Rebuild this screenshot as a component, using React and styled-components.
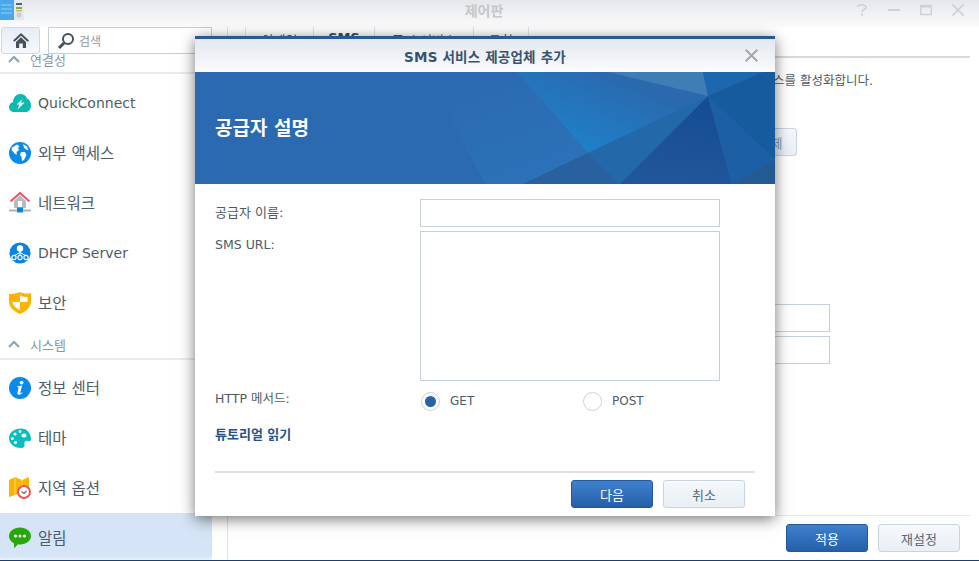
import React from "react";
import styled, { createGlobalStyle } from "styled-components";

const Global = createGlobalStyle`
  html, body { margin: 0; padding: 0; background: #fff; overflow: hidden; }
  * { box-sizing: border-box; }
  body { font-family: "DejaVu Sans", "Noto Sans CJK KR", sans-serif; font-size: 13px; color: #4c5a68; }
`;

const Page = styled.div`
  position: relative;
  width: 979px;
  height: 561px;
  display: flex;
  flex-direction: column;
  overflow: hidden;
  border-bottom: 1px solid #1d3f6e;
`;

const TitleBar = styled.div`
  height: 27px;
  flex: none;
  display: flex;
  align-items: center;
  background: linear-gradient(#e4e7eb, #fbfbfc);
  position: relative;
`;
const TitleText = styled.div`
  flex: 1;
  text-align: center;
  font-size: 14px;
  font-weight: 700;
  color: #c4c7ca;
  margin-top: -8px;
  padding-left: 88px;
`;
const WinButtons = styled.div`
  display: flex;
  gap: 20px;
  padding-right: 15px;
  margin-top: -7px;
`;
const AppLogo = styled.svg`
  width: 24px;
  height: 21px;
  align-self: flex-start;
  flex: none;
`;

const Body = styled.div`
  flex: 1;
  display: flex;
  min-height: 0;
`;
const Side = styled.div`
  width: 228px;
  flex: none;
  border-right: 1px solid #dfe2e6;
  padding-right: 15px;
  display: flex;
  flex-direction: column;
`;
const Toolbar = styled.div`
  height: 27px;
  flex: none;
  display: flex;
  gap: 8px;
  padding-left: 1px;
  background: #fff;
  position: relative;
  z-index: 1;
`;
const HomeButton = styled.div`
  width: 39px;
  display: flex;
  align-items: center;
  justify-content: center;
  border: 1px solid #cfd9e4;
  border-radius: 3px;
  background: linear-gradient(#e7eef7, #f5f8fc);
`;
const SearchBox = styled.div`
  flex: 1;
  display: flex;
  align-items: center;
  gap: 4px;
  padding-left: 8px;
  border: 1px solid #c6cfd9;
  font-size: 12px;
  color: #8f99a4;
`;
const NavList = styled.div`
  flex: 1;
  overflow: hidden;
  min-height: 0;
`;
const NavInner = styled.div`
  margin-top: -10px;
`;
const SectionHead = styled.div`
  height: ${(p) => p.$h}px;
  margin-bottom: ${(p) => p.$mb}px;
  display: flex;
  align-items: center;
  gap: 10px;
  padding: 2px 0 0 8px;
  border-bottom: 2px solid #e9ebee;
  color: #7f98af;
  font-size: 13px;
`;
const NavRow = styled.div`
  height: 50px;
  display: flex;
  align-items: center;
  gap: 7px;
  padding-left: 9px;
  color: #4d5c6c;
  background: ${(p) => (p.$active ? "linear-gradient(#d5e4f6 0, #d5e4f6 86%, #fdfeff 100%)" : "transparent")};
`;
const NavLabel = styled.span`
  font-size: ${(p) => (p.$ko ? 15.5 : 14)}px;
  margin-top: ${(p) => (p.$ko ? -2 : 0)}px;
`;

const Main = styled.div`
  flex: 1;
  display: flex;
  flex-direction: column;
  padding-left: 17px;
  padding-right: 9px;
  min-width: 0;
`;
const Tabs = styled.div`
  height: 31px;
  flex: none;
  display: flex;
  border-bottom: 2px solid #d6d9dd;
`;
const Tab = styled.div`
  width: ${(p) => p.$w}px;
  border-left: 1px solid #e0e3e7;
  border-right: ${(p) => (p.$last ? "1px solid #e0e3e7" : "none")};
  text-align: center;
  font-size: 13px;
  font-weight: ${(p) => (p.$active ? 700 : 400)};
  color: ${(p) => (p.$active ? "#2f4d70" : "#4c5a68")};
  padding-top: 3px;
`;
const MainContent = styled.div`
  flex: 1;
  display: flex;
  flex-direction: column;
  padding-top: 14px;
`;
const Desc = styled.div`
  text-align: right;
  padding-right: 97px;
  font-size: 12.5px;
  line-height: 18px;
  white-space: nowrap;
`;
const DeleteWrap = styled.div`
  display: flex;
  justify-content: flex-end;
  padding-right: 173px;
  margin-top: 38px;
`;
const FieldStack = styled.div`
  display: flex;
  flex-direction: column;
  gap: 4px;
  align-items: flex-end;
  padding-right: 140px;
  margin-top: 148px;
`;
const SmallField = styled.div`
  width: 300px;
  height: 28px;
  border: 1px solid #c6d0db;
`;
const Footer = styled.div`
  margin-top: auto;
  height: 45px;
  flex: none;
  border-top: 1px solid #e4e6e8;
  display: flex;
  justify-content: flex-end;
  gap: 10px;
  padding: 8px 10px 0 0;
`;
const Btn = styled.button`
  width: ${(p) => p.$w || 82}px;
  height: 28px;
  border-radius: 3px;
  font: inherit;
  font-size: 13px;
  padding: 0;
  border: 1px solid ${(p) => (p.$primary ? "#21589e" : "#c9d4e0")};
  color: ${(p) => (p.$primary ? "#fff" : p.$muted ? "#7d9cc0" : "#5a6672")};
  background: ${(p) => (p.$primary ? "linear-gradient(#3f80cd, #2460a9)" : "linear-gradient(#f5f8fc, #e9eff5)")};
`;

const Dialog = styled.div`
  position: absolute;
  left: 195px;
  top: 36px;
  width: 580px;
  height: 480px;
  background: #fff;
  border-top: 3px solid #2a5a94;
  box-shadow: 0 3px 14px rgba(0, 0, 0, 0.55);
  display: flex;
  flex-direction: column;
  z-index: 5;
`;
const DialogHead = styled.div`
  height: 33px;
  flex: none;
  display: flex;
  align-items: center;
  background: linear-gradient(#e3e8ef, #fafbfc);
  font-size: 13.5px;
  letter-spacing: 0.2px;
  font-weight: 700;
  color: #3a5272;
  position: relative;
`;
const DialogTitle = styled.div`
  flex: 1;
  text-align: center;
  padding-top: 1px;
`;
const DialogClose = styled.svg`
  position: absolute;
  right: 17px;
  top: 10px;
`;
const Banner = styled.div`
  height: 112px;
  flex: none;
  position: relative;
  background: #2b69b0;
  display: flex;
  align-items: center;
  padding-left: 20px;
  font-size: 19px;
  font-weight: 700;
  color: #fff;
`;
const BannerArt = styled.svg`
  position: absolute;
  inset: 0;
`;
const BannerText = styled.div`
  position: relative;
  padding-bottom: 3px;
`;
const Form = styled.div`
  flex: 1;
  display: grid;
  grid-template-columns: 205px 300px;
  grid-auto-rows: min-content;
  row-gap: 4px;
  padding: 15px 0 0 20px;
`;
const Label = styled.div`
  font-size: ${(p) => p.$size}px;
  line-height: 18px;
  padding-top: ${(p) => p.$top}px;
`;
const Field = styled.div`
  height: ${(p) => p.$h}px;
  border: 1px solid #c6d0db;
  background: #fff;
`;
const RadioRow = styled.div`
  display: flex;
  align-items: center;
  height: 32px;
  margin-left: 1px;
`;
const RadioItem = styled.div`
  width: 162px;
  flex: none;
  display: flex;
  align-items: center;
  gap: 10px;
  font-size: 12px;
`;
const RadioDot = styled.div`
  width: 19px;
  height: 19px;
  border-radius: 50%;
  border: 1px solid #c9d3de;
  display: flex;
  align-items: center;
  justify-content: center;
  &::after {
    content: "";
    display: ${(p) => (p.$on ? "block" : "none")};
    width: 11px;
    height: 11px;
    border-radius: 50%;
    background: #2a62a8;
  }
`;
const HttpLabel = styled(Label)`
  align-self: center;
  padding-bottom: 4px;
`;
const LinkText = styled.div`
  grid-column: 1 / 3;
  font-size: 13px;
  line-height: 18px;
  font-weight: 700;
  color: #24528c;
  margin-top: 5px;
`;
const DialogFoot = styled.div`
  margin: 0 20px;
  height: 45px;
  flex: none;
  border-top: 2px solid #e2e3e5;
  display: flex;
  justify-content: flex-end;
  gap: 10px;
  padding: 7px 10px 0 0;
`;

const Chevron = () => (
  <svg width="12" height="8" viewBox="0 0 12 8">
    <path d="M1 7 L6 2 L11 7" fill="none" stroke="#8aa1b6" strokeWidth="2" />
  </svg>
);

const IconCloud = () => (
  <svg width="22" height="22" viewBox="0 0 22 22">
    <path d="M5 20 C2 20 0 17.5 0 15 C0 12.5 1.8 10.5 4 10.2 C4 5.5 7.5 2 11.5 2 C14.5 2 17 3.5 18 6.5 C20.5 7.5 22 10.5 22 13.5 C22 17.5 19.5 20 17 20 Z" fill="#0cb9b0" />
    <path d="M14 6.5 L7.5 12.5 L10.5 12.5 L8.5 17.5 L15.5 10.5 L11.5 10.5 Z" fill="#fff" />
  </svg>
);
const IconGlobe = () => (
  <svg width="22" height="22" viewBox="0 0 22 22">
    <circle cx="11" cy="11" r="11" fill="#0a8ae8" />
    <path d="M3 5.5 L8 2.5 L10.5 4 L9 6 L10 8 L7.5 10 L8 12.5 L6 12 L3.5 9 L2.5 8 Z" fill="#fff" />
    <path d="M12 10 L16 10 L17.5 13 L15 18 L13 19 L12.5 15 L11 13 Z" fill="#fff" />
    <path d="M14 2 L18 4.5 L19.5 8 L17 7.5 L15 5.5 Z" fill="#fff" />
  </svg>
);
const IconNetwork = () => (
  <svg width="22" height="22" viewBox="0 0 22 22">
    <path d="M5 9 L11 3.5 L17 9 L17 16 L5 16 Z" fill="#b5bcc6" />
    <path d="M1.5 9.5 L11 1 L20.5 9.5" fill="none" stroke="#f4525a" strokeWidth="2" />
    <rect x="9" y="9" width="4" height="6" fill="#fff" />
    <rect x="0" y="17.5" width="22" height="2" fill="#a9b5c2" />
    <rect x="8" y="15.5" width="6" height="5" fill="#0a84de" />
  </svg>
);
const IconDhcp = () => (
  <svg width="22" height="22" viewBox="0 0 22 22">
    <circle cx="11" cy="11" r="10.5" fill="#0a84de" />
    <circle cx="11" cy="6.5" r="3.2" fill="#fff" />
    <path d="M11 9 V13 M11 10.5 L5.5 13.5 M11 10.5 L16.5 13.5" stroke="#fff" strokeWidth="1" fill="none" />
    <circle cx="5" cy="15.5" r="2.1" fill="none" stroke="#fff" strokeWidth="1.1" />
    <circle cx="11" cy="15.5" r="2.1" fill="none" stroke="#fff" strokeWidth="1.1" />
    <circle cx="17" cy="15.5" r="2.1" fill="none" stroke="#fff" strokeWidth="1.1" />
  </svg>
);
const IconShield = () => (
  <svg width="22" height="22" viewBox="0 0 22 22">
    <path d="M0 2 C4 2 8 1.5 11 0 C14 1.5 18 2 22 1 L22 10 C22 15 17 19.5 11 22 C5 19.5 0 15 0 10 Z" fill="#fdb400" />
    <path d="M11 3.5 C13.5 4.5 16 5 18.5 5 L18.5 10 L11 10 Z" fill="#fff" />
    <path d="M3.5 10 L11 10 L11 18 C7.5 16.5 4 14 3.5 10 Z" fill="#fff" />
  </svg>
);
const IconInfo = () => (
  <svg width="22" height="22" viewBox="0 0 22 22">
    <circle cx="11" cy="11" r="11" fill="#0a8ae8" />
    <circle cx="12.6" cy="5.6" r="1.9" fill="#fff" />
    <path d="M8.2 9.2 L13.2 8.6 L11.2 15.6 C11 16.4 11.8 16.4 13.2 15.2 L13.6 15.8 C11.8 18 8 18.6 8.4 15.8 L9.6 11 C9.8 10.2 9 10 8.2 10 Z" fill="#fff" />
  </svg>
);
const IconPalette = () => (
  <svg width="22" height="22" viewBox="0 0 22 22">
    <path d="M12 1.5 C18 1.5 22 6.5 22 12 C22 14 21 14.5 19 14 C16 13.3 15 15 15.5 17 C16 19.5 15 21 12 21 C5 21 0 16.5 0 11 C0 5.5 5.5 1.5 12 1.5 Z" fill="#07bec0" />
    <circle cx="6" cy="7" r="1.6" fill="#fff" />
    <circle cx="11" cy="4.6" r="1.4" fill="#fff" />
    <circle cx="3.4" cy="11.5" r="1.5" fill="#fff" />
    <circle cx="6.5" cy="15.5" r="1.6" fill="#fff" />
    <ellipse cx="15" cy="8.5" rx="2.6" ry="2" fill="#fff" />
  </svg>
);
const IconMap = () => (
  <svg width="22" height="22" viewBox="0 0 22 22">
    <path d="M0 3 L6 0 L13 3 L20 0 L20 12 L13 15 L6 18 L0 20 Z" fill="#fdb400" />
    <path d="M6 0 L6 18 M13 3 L13 15" stroke="#ffd873" strokeWidth="1" />
    <circle cx="15" cy="15" r="6" fill="#fff" stroke="#f4525a" strokeWidth="2" />
    <path d="M12.5 14.5 L15 16.5 L17.5 14" fill="none" stroke="#666" strokeWidth="1.2" />
  </svg>
);
const IconChat = () => (
  <svg width="22" height="22" viewBox="0 0 22 22">
    <path d="M11 0.5 C17.2 0.5 22 4.2 22 9 C22 13.8 17.2 17.5 11 17.5 C10.2 17.5 9.5 17.4 8.8 17.3 C7.6 19 5.5 21 5 21.5 C5.2 19.5 5.2 17.8 4.6 16 C1.8 14.5 0 12 0 9 C0 4.2 4.8 0.5 11 0.5 Z" fill="#27a70a" />
    <circle cx="6.5" cy="9" r="1.5" fill="#fff" />
    <circle cx="11" cy="9" r="1.5" fill="#fff" />
    <circle cx="15.5" cy="9" r="1.5" fill="#fff" />
  </svg>
);

const topItems = [
  { icon: <IconCloud />, label: "QuickConnect" },
  { icon: <IconGlobe />, label: "외부 액세스", ko: true },
  { icon: <IconNetwork />, label: "네트워크", ko: true },
  { icon: <IconDhcp />, label: "DHCP Server" },
  { icon: <IconShield />, label: "보안", ko: true },
];
const systemItems = [
  { icon: <IconInfo />, label: "정보 센터", ko: true },
  { icon: <IconPalette />, label: "테마", ko: true },
  { icon: <IconMap />, label: "지역 옵션", ko: true },
  { icon: <IconChat />, label: "알림", ko: true, active: true },
];

export default function App() {
  return (
    <Page>
      <Global />
      <TitleBar>
        <AppLogo viewBox="0 0 24 21">
          <rect x="0" y="0" width="14" height="20" fill="#4aa7ea" />
          <path d="M1 5 H12 M1 9 H12 M1 13 H12" stroke="#8fd0f7" strokeWidth="1" />
          <rect x="14" y="0" width="10" height="20" fill="#e4e9ee" />
          <rect x="16" y="3" width="6" height="2" fill="#59636e" />
          <rect x="16" y="7" width="6" height="2" fill="#6fb24a" />
          <rect x="16" y="10" width="6" height="1.5" fill="#e2b53f" />
          <circle cx="19" cy="15" r="2.5" fill="#c5ccd3" />
        </AppLogo>
        <TitleText>제어판</TitleText>
        <WinButtons>
          <svg width="12" height="12" viewBox="0 0 12 12">
            <path d="M1.5 3 C2 0.5 10 0 10 3.5 C10 6 6 5.5 6 8" fill="none" stroke="#cdd0d4" strokeWidth="1.6" />
            <rect x="5" y="9.5" width="2" height="2" fill="#cdd0d4" />
          </svg>
          <svg width="12" height="12" viewBox="0 0 12 12">
            <rect x="0" y="5" width="12" height="2" fill="#cdd0d4" />
          </svg>
          <svg width="12" height="12" viewBox="0 0 12 12">
            <rect x="0.75" y="1.5" width="10.5" height="9" fill="none" stroke="#cdd0d4" strokeWidth="1.5" />
            <rect x="0" y="1" width="12" height="2.5" fill="#cdd0d4" />
          </svg>
          <svg width="12" height="12" viewBox="0 0 12 12">
            <path d="M0.5 0.5 L11.5 11.5 M11.5 0.5 L0.5 11.5" stroke="#cdd0d4" strokeWidth="1.6" />
          </svg>
        </WinButtons>
      </TitleBar>
      <Body>
        <Side>
          <Toolbar>
            <HomeButton>
              <svg width="16" height="15" viewBox="0 0 16 15">
                <path d="M8 0 L16 7.5 L14.5 8.8 L8 2.8 L1.5 8.8 L0 7.5 Z" fill="#47515c" />
                <path d="M3 9 L8 4.3 L13 9 L13 15 L9.8 15 L9.8 10.5 L6.2 10.5 L6.2 15 L3 15 Z" fill="#47515c" />
              </svg>
            </HomeButton>
            <SearchBox>
              <svg width="18" height="18" viewBox="0 0 18 18">
                <circle cx="11" cy="7" r="5" fill="none" stroke="#47515c" strokeWidth="2" />
                <path d="M7 11 L2 16" stroke="#47515c" strokeWidth="3" />
              </svg>
              검색
            </SearchBox>
          </Toolbar>
          <NavList>
            <NavInner>
              <SectionHead $h={30} $mb={4}>
                <Chevron />
                연결성
              </SectionHead>
              {topItems.map((item) => (
                <NavRow key={item.label}>
                  {item.icon}
                  <NavLabel $ko={item.ko}>{item.label}</NavLabel>
                </NavRow>
              ))}
              <SectionHead $h={32} $mb={3}>
                <Chevron />
                시스템
              </SectionHead>
              {systemItems.map((item) => (
                <NavRow key={item.label} $active={item.active}>
                  {item.icon}
                  <NavLabel $ko={item.ko}>{item.label}</NavLabel>
                </NavRow>
              ))}
            </NavInner>
          </NavList>
        </Side>
        <Main>
          <Tabs>
            <Tab $w={68}>이메일</Tab>
            <Tab $w={61} $active>
              SMS
            </Tab>
            <Tab $w={99}>푸시 서비스</Tab>
            <Tab $w={56} $last>
              규칙
            </Tab>
          </Tabs>
          <MainContent>
            <Desc>SMS 알림을 받으려면 SMS 서비스를 활성화합니다.</Desc>
            <DeleteWrap>
              <Btn $w={53} $muted>
                삭제
              </Btn>
            </DeleteWrap>
            <FieldStack>
              <SmallField />
              <SmallField />
            </FieldStack>
            <Footer>
              <Btn $primary>적용</Btn>
              <Btn>재설정</Btn>
            </Footer>
          </MainContent>
        </Main>
      </Body>
      <Dialog>
        <DialogHead>
          <DialogTitle>SMS 서비스 제공업체 추가</DialogTitle>
          <DialogClose width="13" height="13" viewBox="0 0 13 13">
            <path d="M0.7 0.7 L12.3 12.3 M12.3 0.7 L0.7 12.3" stroke="#a3a7ac" strokeWidth="2" />
          </DialogClose>
        </DialogHead>
        <Banner>
          <BannerArt width="580" height="112" viewBox="0 0 580 112">
            <defs>
              <linearGradient id="stripe" gradientUnits="userSpaceOnUse" x1="280" y1="0" x2="320" y2="112">
                <stop offset="0" stopColor="#2b69b0" />
                <stop offset="1" stopColor="#2c72b8" />
              </linearGradient>
              <linearGradient id="bright" gradientUnits="userSpaceOnUse" x1="430" y1="8" x2="398" y2="82">
                <stop offset="0" stopColor="#2a69ae" />
                <stop offset="1" stopColor="#1f80c8" />
              </linearGradient>
              <linearGradient id="deep" gradientUnits="userSpaceOnUse" x1="500" y1="30" x2="490" y2="112">
                <stop offset="0" stopColor="#154c93" />
                <stop offset="1" stopColor="#22569a" />
              </linearGradient>
            </defs>
            <polygon points="233,0 322,0 393,81 328,112 290,112" fill="url(#stripe)" />
            <polygon points="322,0 413,0 513,24 393,81" fill="url(#bright)" />
            <polygon points="413,0 508,0 513,24" fill="#3f7db6" />
            <polygon points="508,0 568,0 513,24" fill="#1c67ae" />
            <polygon points="568,0 580,0 580,88 513,24" fill="#175b9f" />
            <polygon points="393,81 513,24 425,112" fill="#2369aa" />
            <polygon points="425,112 513,24 537,112" fill="url(#deep)" />
            <polygon points="513,24 580,88 537,112" fill="#1c5fa5" />
            <polygon points="537,112 580,88 580,112" fill="#245a92" />
            <polygon points="328,112 393,81 425,112" fill="#29609f" />
          </BannerArt>
          <BannerText>공급자 설명</BannerText>
        </Banner>
        <Form>
          <Label $top={5} $size={13}>공급자 이름:</Label>
          <Field $h={28} />
          <Label $top={5} $size={12.5}>SMS URL:</Label>
          <Field $h={150} />
          <HttpLabel $top={0} $size={12.5}>HTTP 메서드:</HttpLabel>
          <RadioRow>
            <RadioItem>
              <RadioDot $on />
              GET
            </RadioItem>
            <RadioItem>
              <RadioDot />
              POST
            </RadioItem>
          </RadioRow>
          <LinkText>튜토리얼 읽기</LinkText>
        </Form>
        <DialogFoot>
          <Btn $primary>다음</Btn>
          <Btn>취소</Btn>
        </DialogFoot>
      </Dialog>
    </Page>
  );
}
